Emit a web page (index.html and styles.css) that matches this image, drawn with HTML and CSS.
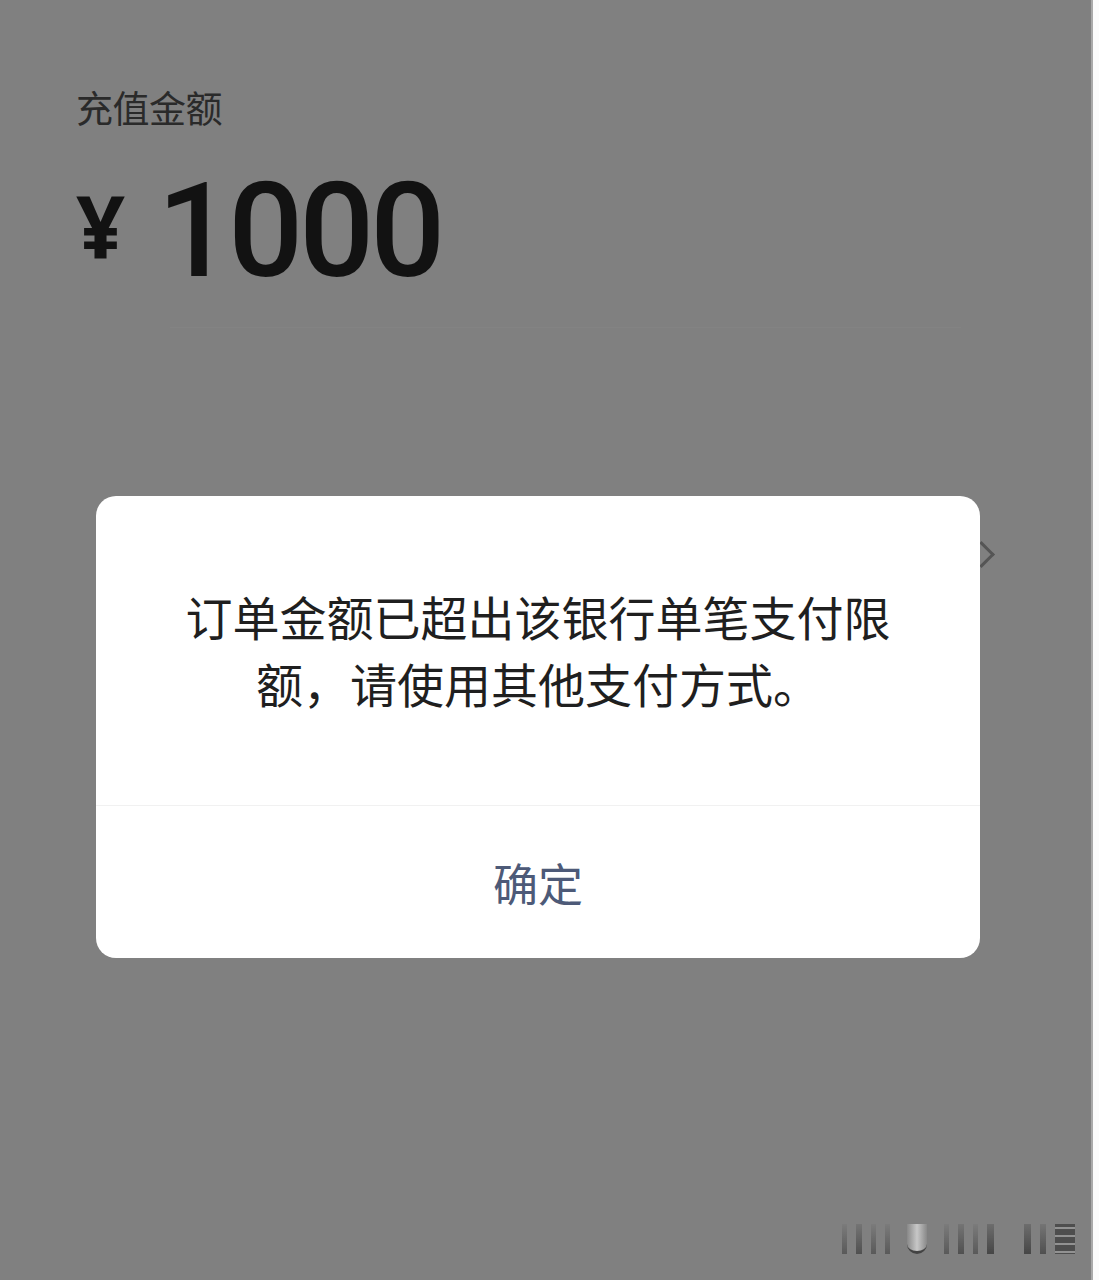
FILE: index.html
```html
<!DOCTYPE html>
<html lang="zh-CN">
<head>
<meta charset="utf-8">
<title>充值金额</title>
<link rel="stylesheet" href="styles.css">
</head>
<body>
<div class="page">
  <main class="screen">
    <div class="label">充值金额</div>
    <div class="amount"><span class="yen">¥</span><span class="value">1000</span></div>
    <div class="rule"></div>
    <span class="chevron"></span>
    <section class="dialog">
      <p class="message">订单金额已超出该银行单笔支付限额，请使用其他支付方式。</p>
      <button class="confirm" type="button">确定</button>
    </section>
    <div class="mark">
      <i class="b1"></i><i class="b2"></i><i class="b1"></i><i class="b1"></i>
      <i class="cup"></i>
      <i class="b1"></i><i class="b2"></i><i class="b1"></i><i class="b3"></i>
      <i class="gap"></i>
      <i class="b3"></i><i class="b2"></i><i class="lines"></i>
    </div>
  </main>
  <div class="edge"></div>
</div>
</body>
</html>
```

FILE: styles.css
```css
html, body {
  margin: 0;
  padding: 0;
  background: #808080;
}

.page {
  display: flex;
  width: 1099px;
  height: 1280px;
  overflow: hidden;
}

.screen {
  position: relative;
  width: 1091px;
  flex: none;
  background: #808080;
  padding: 85px 0 0 0;
  box-sizing: border-box;
  font-family: "Noto Sans CJK SC", "Noto Sans", sans-serif;
}

.edge {
  flex: 1;
  background: #fbfbfb;
  border-left: 2px solid #a9a9a9;
}

.label {
  margin-left: 76px;
  font-size: 37px;
  line-height: 44px;
  color: #2a2a2a;
  letter-spacing: -0.5px;
}

.amount {
  display: flex;
  align-items: baseline;
  margin: 36px 0 0 76px;
  height: 120px;
  color: #121212;
}

.yen {
  font-family: "Noto Sans", sans-serif;
  font-size: 86px;
  font-weight: 700;
  line-height: 1;
  margin-right: 32px;
  position: relative;
  top: -18px;
}

.value {
  font-family: Roboto, "Noto Sans", sans-serif;
  font-weight: 500;
  font-size: 132px;
  line-height: 1;
  letter-spacing: -4px;
}

.rule {
  height: 1px;
  margin: 42px 130px 0 170px;
  background: #838383;
}

.chevron {
  position: absolute;
  left: 972px;
  top: 545px;
  width: 16px;
  height: 16px;
  border-top: 3px solid #555;
  border-right: 3px solid #555;
  transform: rotate(45deg);
}

.dialog {
  position: relative;
  z-index: 1;
  width: 884px;
  margin: 168px 0 0 96px;
  background: #ffffff;
  border-radius: 20px;
  overflow: hidden;
}

.message {
  margin: 0;
  padding: 86px 80px 89px;
  border-bottom: 1px solid #f1f1f1;
  font-size: 47px;
  line-height: 67px;
  color: #1f1f1f;
  text-align: center;
}

.confirm {
  display: block;
  width: 100%;
  height: 152px;
  margin: 0;
  padding: 0;
  border: 0;
  background: transparent;
  font-family: "Noto Sans CJK SC", sans-serif;
  font-size: 45px;
  color: #4d5a78;
  text-align: center;
}

/* faint watermark bars in the lower right corner */
.mark {
  position: absolute;
  left: 842px;
  top: 1224px;
  display: flex;
  align-items: stretch;
  gap: 9px;
  height: 30px;
  opacity: 0.7;
}

.mark i {
  display: block;
  background: linear-gradient(#7a7a7a, #4a4a4a);
}

.mark .b1 { width: 5px; }
.mark .b2 { width: 6px; background: linear-gradient(#707070, #3c3c3c); }
.mark .b3 { width: 7px; background: linear-gradient(#666, #2e2e2e); }
.mark .gap { width: 12px; background: transparent; }

.mark .cup {
  width: 20px;
  margin: 0 8px;
  border-radius: 0 0 10px 10px;
  background: linear-gradient(90deg, #8c8c8c, #e6e6e6 50%, #8c8c8c);
  border-bottom: 3px solid #2a2a2a;
  box-sizing: border-box;
}

.mark .lines {
  width: 20px;
  background: repeating-linear-gradient(#3a3a3a 0 3px, #9a9a9a 3px 5px, #3a3a3a 5px 8px);
}
```
